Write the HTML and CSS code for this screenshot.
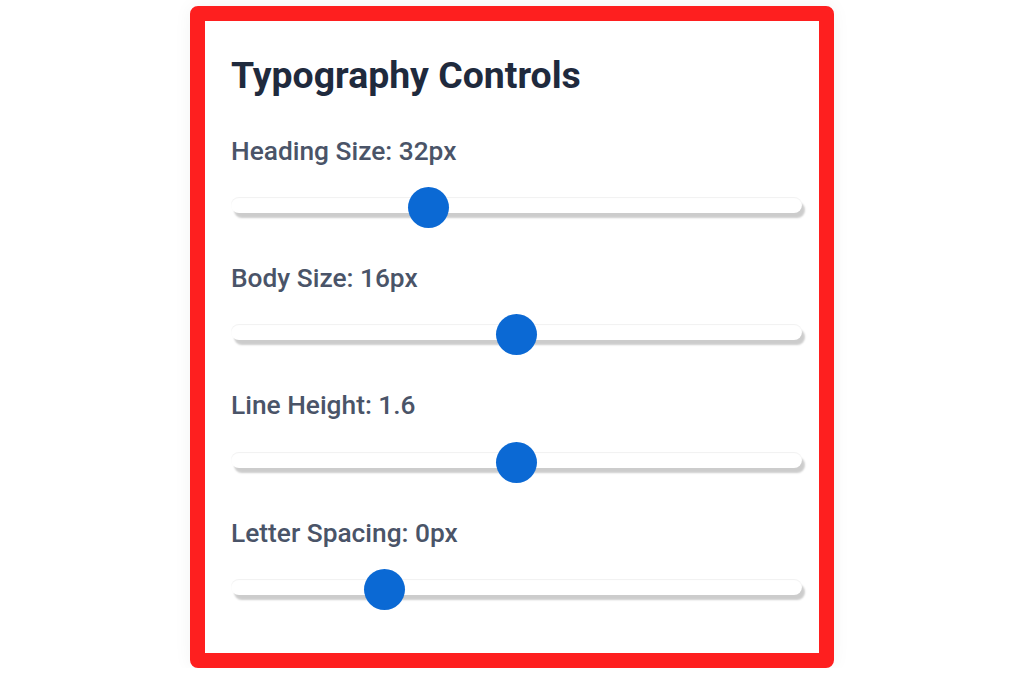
FILE: index.html
```html
<!DOCTYPE html>
<html lang="en">
<head>
<meta charset="utf-8">
<title>Typography Controls</title>
<link rel="stylesheet" href="styles.css">
</head>
<body>
<section class="card">
  <h1 class="title">Typography Controls</h1>
  <div class="controls">
    <div class="control">
      <label class="label">Heading Size: 32px</label>
      <div class="slider" role="slider" aria-valuemin="16" aria-valuemax="64" aria-valuenow="32">
        <div class="track"><span class="thumb" style="left: calc((100% - 41px) * 0.3333)"></span></div>
      </div>
    </div>
    <div class="control">
      <label class="label">Body Size: 16px</label>
      <div class="slider" role="slider" aria-valuemin="12" aria-valuemax="20" aria-valuenow="16">
        <div class="track"><span class="thumb" style="left: calc((100% - 41px) * 0.5)"></span></div>
      </div>
    </div>
    <div class="control">
      <label class="label">Line Height: 1.6</label>
      <div class="slider" role="slider" aria-valuemin="1.2" aria-valuemax="2" aria-valuenow="1.6">
        <div class="track"><span class="thumb" style="left: calc((100% - 41px) * 0.5)"></span></div>
      </div>
    </div>
    <div class="control">
      <label class="label">Letter Spacing: 0px</label>
      <div class="slider" role="slider" aria-valuemin="-2" aria-valuemax="6" aria-valuenow="0">
        <div class="track"><span class="thumb" style="left: calc((100% - 41px) * 0.25)"></span></div>
      </div>
    </div>
  </div>
</section>
</body>
</html>
```
FILE: styles.css
```css
* { box-sizing: border-box; }
html, body { margin: 0; background: #ffffff; }
body {
  padding-top: 6px;
  font-family: Roboto, "Liberation Sans", Arial, sans-serif;
}
.card {
  width: 644px;
  height: 662px;
  margin: 0 auto;
  border: 15px solid #fe1f1f;
  border-radius: 8px;
  background: #ffffff;
  padding: 31.5px 17px 0 26px;
  box-shadow: 0 0 18px rgba(0, 0, 0, 0.05);
}
.title {
  margin: 0 0 38px;
  font-size: 37.4px;
  line-height: 44px;
  font-weight: 700;
  color: #1f2a3d;
}
.controls {
  display: flex;
  flex-direction: column;
  gap: 34px;
}
.control {
  display: flex;
  flex-direction: column;
  gap: 20.4px;
}
.label {
  display: block;
  font-size: 26.3px;
  line-height: 32px;
  font-weight: 500;
  color: #4a5468;
}
.slider {
  padding: 10px 0 15px;
}
.track {
  position: relative;
  height: 16px;
  border-radius: 8px;
  background: #ffffff;
  box-shadow: 3px 5px 2px rgba(0, 0, 0, 0.2), inset 0 1px 1px rgba(0, 0, 0, 0.06);
}
.thumb {
  position: absolute;
  top: -10px;
  width: 41px;
  height: 41px;
  border-radius: 50%;
  background: #0b69d4;
}
```
